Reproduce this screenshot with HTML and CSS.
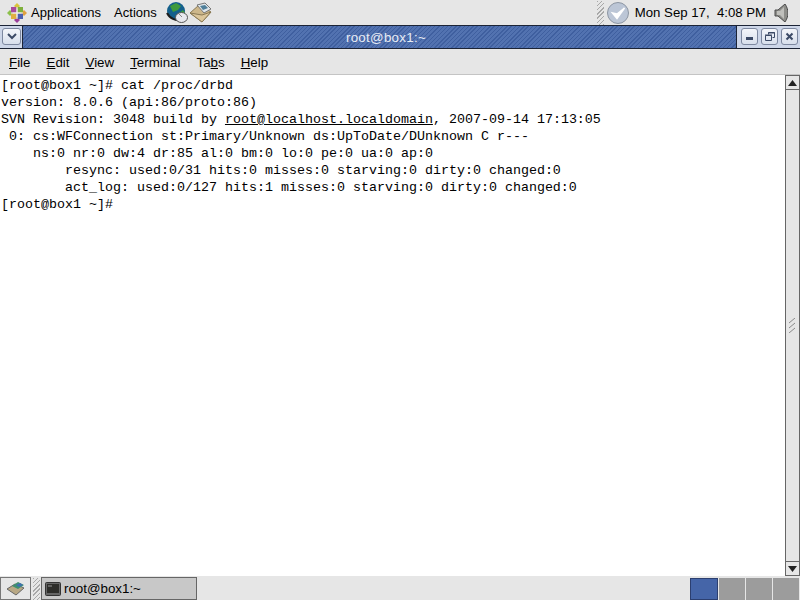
FILE: index.html
```html
<!DOCTYPE html>
<html lang="en">
<head>
<meta charset="utf-8">
<title>root@box1:~</title>
<link rel="stylesheet" href="styles.css">
</head>
<body>
<div class="desktop">
  <header class="top-panel">
    <svg class="logo" width="20" height="20" viewBox="0 0 20 20">
      <path d="M10 0l3 3-3 3-3-3z" fill="#d8c43c"/>
      <path d="M20 10l-3 3-3-3 3-3z" fill="#e0a040"/>
      <path d="M10 20l-3-3 3-3 3 3z" fill="#9a3f9a"/>
      <path d="M0 10l3-3 3 3-3 3z" fill="#8cc04a"/>
      <rect x="4" y="4" width="5.500" height="5.500" fill="#a84a9c"/>
      <rect x="10.500" y="4" width="5.500" height="5.500" fill="#7fb03c"/>
      <rect x="4" y="10.500" width="5.500" height="5.500" fill="#e0b040"/>
      <rect x="10.500" y="10.500" width="5.500" height="5.500" fill="#4a5fb0"/>
      <path d="M10 4v12M4 10h12" stroke="#f2f0ea" stroke-width="1"/>
    </svg>
    <span class="panel-menu">Applications</span>
    <span class="panel-menu actions">Actions</span>
    <svg class="launcher" width="23" height="22" viewBox="0 0 23 22">
      <circle cx="10" cy="9" r="9" fill="#14608c"/>
      <path d="M4 4l6-3 5 3-3 4-5 2zM12 12l5-4 2 3-4 4z" fill="#3f9a3c"/>
      <path d="M1 11c3 6 10 8 14 7" stroke="#1e1e1e" stroke-width="2" fill="none"/>
      <ellipse cx="15.500" cy="15.500" rx="6" ry="5" fill="#e8e8ee" stroke="#555"/>
      <path d="M13 12l3 3" stroke="#888"/>
    </svg>
    <svg class="launcher" width="24" height="22" viewBox="0 0 24 22">
      <path d="M1 11L10 3l12 7-9 10z" fill="#cdb78a" stroke="#8a7a55"/>
      <path d="M8 3l8-2 6 6-7 4z" fill="#dfe6ea" stroke="#777"/>
      <path d="M11 4l5-1 3 3-5 2z" fill="#4f7f9a"/>
      <path d="M1 11l12 2 9-3-9 10z" fill="#dcc69a" stroke="#8a7a55"/>
    </svg>
    <div class="panel-spacer"></div>
    <div class="handle"></div>
    <svg class="check" width="24" height="24" viewBox="0 0 24 24">
      <circle cx="12" cy="12" r="10.500" fill="#bcc6d6" stroke="#8d96a3"/>
      <path d="M6.500 12l4.500 5.500L18.500 7l-7.500 6z" fill="#fff" stroke="#fff" stroke-width="1.500"/>
    </svg>
    <span class="clock">Mon Sep 17,&nbsp; 4:08 PM</span>
    <svg class="volume" width="14" height="18" viewBox="0 0 14 18">
      <path d="M1 6h3l7-6c2 3 3 6 3 9s-1 6-3 9l-7-6H1z" fill="#8e8e8a" stroke="#4a4a4a"/>
      <path d="M3 7h3l4-4v12l-4-4H3z" fill="#c0c0bc"/>
    </svg>
  </header>

  <section class="window">
    <div class="titlebar">
      <button class="wm-btn menu-btn" aria-label="Window menu">
        <svg width="10" height="7" viewBox="0 0 10 7"><path d="M1 1l4 4 4-4" stroke="#3c4a66" stroke-width="2" fill="none"/></svg>
      </button>
      <div class="title">root@box1:~</div>
      <div class="wm-group">
        <button class="wm-btn" aria-label="Minimize">
          <svg width="9" height="9" viewBox="0 0 9 9"><rect x="1" y="5" width="7" height="3" fill="#3c4a66"/></svg>
        </button>
        <button class="wm-btn" aria-label="Maximize">
          <svg width="10" height="10" viewBox="0 0 10 10"><path d="M3.500 2.500V.5h6v5h-2M.5 3.500h6v5h-6z" stroke="#3c4a66" fill="none"/><path d="M3 1h7M0 3h7" stroke="#3c4a66"/></svg>
        </button>
        <button class="wm-btn" aria-label="Close">
          <svg width="9" height="9" viewBox="0 0 9 9"><path d="M1.500 1.500l6 6M7.500 1.500l-6 6" stroke="#3c4a66" stroke-width="2"/></svg>
        </button>
      </div>
    </div>
    <nav class="menubar">
      <span class="menu-item"><u>F</u>ile</span>
      <span class="menu-item"><u>E</u>dit</span>
      <span class="menu-item"><u>V</u>iew</span>
      <span class="menu-item"><u>T</u>erminal</span>
      <span class="menu-item">Ta<u>b</u>s</span>
      <span class="menu-item"><u>H</u>elp</span>
    </nav>
    <div class="content">
<pre class="terminal">[root@box1 ~]# cat /proc/drbd
version: 8.0.6 (api:86/proto:86)
SVN Revision: 3048 build by <u>root@localhost.localdomain</u>, 2007-09-14 17:13:05
 0: cs:WFConnection st:Primary/Unknown ds:UpToDate/DUnknown C r---
    ns:0 nr:0 dw:4 dr:85 al:0 bm:0 lo:0 pe:0 ua:0 ap:0
        resync: used:0/31 hits:0 misses:0 starving:0 dirty:0 changed:0
        act_log: used:0/127 hits:1 misses:0 starving:0 dirty:0 changed:0
[root@box1 ~]#</pre>
      <div class="scrollbar">
        <div class="scroll-btn"><svg width="9" height="6" viewBox="0 0 9 6"><path d="M4.500 0L9 6H0z" fill="#222"/></svg></div>
        <div class="scroll-thumb">
          <svg width="9" height="15" viewBox="0 0 9 15"><path d="M1 5l6-5M1 10l6-5M1 15l6-5" stroke="#8a8a8a" fill="none"/></svg>
        </div>
        <div class="scroll-btn"><svg width="9" height="6" viewBox="0 0 9 6"><path d="M0 0h9L4.500 6z" fill="#222"/></svg></div>
      </div>
    </div>
  </section>

  <footer class="bottom-panel">
    <button class="show-desktop" aria-label="Show desktop">
      <svg width="20" height="17" viewBox="0 0 20 17">
        <path d="M1 9l8-5 9 4-8 7z" fill="#b8a884" stroke="#666"/>
        <path d="M6 6l6-4 6 3-6 4z" fill="#3f8f6f"/>
        <path d="M10 5l4-2 3 2-4 2z" fill="#3f6fb0"/>
      </svg>
    </button>
    <div class="handle small"></div>
    <button class="task">
      <svg width="16" height="14" viewBox="0 0 16 14">
        <rect x=".5" y=".5" width="15" height="13" rx="1" fill="#666" stroke="#333"/>
        <rect x="2" y="2" width="12" height="9" fill="#2d2d2a"/>
        <path d="M3 4h4" stroke="#999"/>
      </svg>
      <span>root@box1:~</span>
    </button>
    <div class="panel-spacer"></div>
    <div class="pager">
      <div class="workspace active"></div>
      <div class="workspace"></div>
      <div class="workspace"></div>
      <div class="workspace"></div>
    </div>
  </footer>
</div>
</body>
</html>
```
FILE: styles.css
```css
* { box-sizing: border-box; }
html, body { margin: 0; padding: 0; }
body { width: 800px; height: 600px; overflow: hidden; background: #e6e6e6; font-family: "Liberation Sans", Arial, sans-serif; font-size: 13.33px; color: #000; }
.desktop { width: 800px; height: 600px; display: flex; flex-direction: column; }
button { padding: 0; margin: 0; font: inherit; color: inherit; }

.top-panel { height: 25px; flex: none; display: flex; align-items: center; background: #e6e6e6; padding-left: 7px; }
.logo { flex: none; }
.panel-menu { margin-left: 4px; font-size: 13px; }
.actions { margin-left: 13px; }
.launcher { flex: none; }
.actions + .launcher { margin-left: 9px; }
.panel-spacer { flex: 1; }
.handle { width: 7px; height: 24px; flex: none; background: repeating-linear-gradient(135deg, #a8a8a8 0 1px, #e6e6e6 1px 3px); }
.handle.small { height: 22px; margin: 0 1px 0 2px; }
.check { margin: 0 5px 0 2px; flex: none; }
.clock { white-space: nowrap; font-size: 13.2px; }
.volume { margin: 0 12px 0 8px; flex: none; }

.window { flex: 1; min-height: 0; display: flex; flex-direction: column; }
.titlebar { height: 24px; flex: none; display: flex; background: #cdd6e8; border-top: 1px solid #1c2436; border-bottom: 1px solid #1c2436; }
.wm-btn { width: 17px; height: 17px; margin-top: 2px; display: flex; align-items: center; justify-content: center; background: linear-gradient(#f4f6fa, #d8dfec); border: 1px solid #7d88a0; border-radius: 3px; }
.menu-btn { width: 19px; margin-left: 2px; margin-right: 1px; flex: none; }
.title { flex: 1; height: 22px; line-height: 23px; text-align: center; color: #e8ecf4; letter-spacing: .3px; border-left: 1px solid #1c2436; border-right: 1px solid #1c2436; background: repeating-linear-gradient(135deg, #3f5f9f 0 1px, #5272b0 1px 3px); padding-left: 13px; }
.wm-group { display: flex; gap: 3px; padding: 0 2px 0 4px; flex: none; }

.menubar { height: 26px; flex: none; display: flex; align-items: center; padding: 1px 0 0 9px; gap: 16px; background: #e6e6e6; border-bottom: 1px solid #c4c4c4; }
.menu-item { white-space: nowrap; }

.content { flex: 1; min-height: 0; display: flex; background: #fff; }
.terminal { flex: 1; margin: 0; padding: 2px 0 0 1px; font-family: "Liberation Mono", "Courier New", monospace; font-size: 13.33px; line-height: 17px; color: #000; background: #fff; overflow: hidden; }
.scrollbar { width: 15px; flex: none; display: flex; flex-direction: column; background: #d0d0d0; border-left: 1px solid #666; border-right: 1px solid #666; }
.scroll-btn { height: 15px; flex: none; display: flex; align-items: center; justify-content: center; background: #e6e6e6; border-top: 1px solid #666; border-bottom: 1px solid #666; }
.scroll-thumb { flex: 1; display: flex; align-items: center; justify-content: center; background: #e6e6e6; }

.bottom-panel { height: 24px; flex: none; display: flex; align-items: center; background: #e6e6e6; border-top: 1px solid #e6e6e6; }
.show-desktop { width: 31px; height: 23px; display: flex; align-items: center; justify-content: center; background: #e6e6e6; border: 1px solid #777; flex: none; }
.task { width: 156px; height: 23px; display: flex; align-items: center; gap: 3px; padding-left: 3px; background: #c8c8c8; border: 1px solid #666; flex: none; }
.pager { width: 109px; height: 22px; display: flex; gap: 1px; background: #e6e6e6; margin-right: 1px; flex: none; }
.workspace { flex: 1; background: #9c9c9c; }
.workspace.active { background: #4565a8; border: 1px solid #fff; border-top: 1px solid #2c3f70; outline: 1px solid #2c3f70; outline-offset: -1px; }
```
